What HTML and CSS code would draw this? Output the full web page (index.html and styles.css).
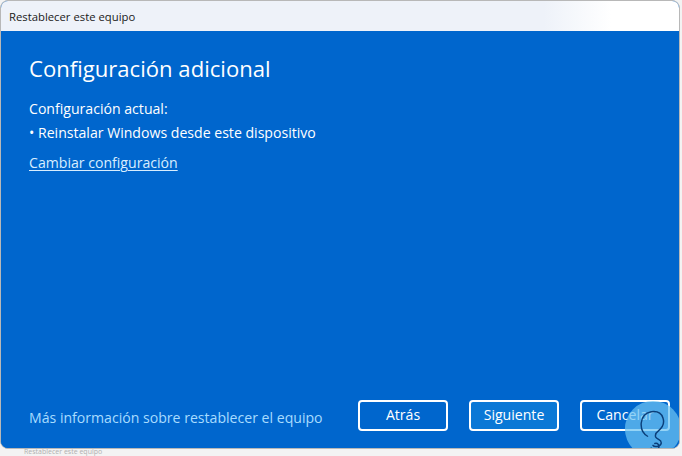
FILE: index.html
```html
<!DOCTYPE html>
<html lang="es">
<head>
<meta charset="utf-8">
<title>Restablecer este equipo</title>
<link rel="stylesheet" href="styles.css">
</head>
<body>
<div class="window">
  <div class="titlebar">Restablecer este equipo</div>
  <div class="content">
    <div class="main">
      <h1 class="heading">Configuración adicional</h1>
      <p class="label">Configuración actual:</p>
      <p class="item">• Reinstalar Windows desde este dispositivo</p>
      <a class="link change" href="#">Cambiar configuración</a>
    </div>
    <div class="footer">
      <a class="more" href="#">Más información sobre restablecer el equipo</a>
      <div class="buttons">
        <button class="btn">Atrás</button>
        <button class="btn primary">Siguiente</button>
        <button class="btn">Cancelar</button>
      </div>
    </div>
  </div>
  <svg class="badge" width="58" height="58" viewBox="0 0 64 64">
    <circle cx="32" cy="32" r="31" fill="#6cc3f2" fill-opacity="0.72"/>
    <path d="M26 40 C16 34 16 16 30 13 C44 11 48 26 38 34 C35 36 34 38 35 41 C37 44 42 44 41 48 C40 52 33 52 32 50 M34 48 C37 47 40 50 38 53 C36 56 31 55 30 53" fill="none" stroke="#0b3f7a" stroke-width="1.6" stroke-linecap="round"/>
  </svg>
</div>
<div class="below">Restablecer este equipo</div>
</body>
</html>
```
FILE: styles.css
```css
* { box-sizing: border-box; }
html, body { margin: 0; padding: 0; }
body {
  width: 682px;
  height: 456px;
  overflow: hidden;
  background: #f3f3f3;
  font-family: "Open Sans", "Noto Sans", sans-serif;
  position: relative;
}
.window {
  width: 680px;
  height: 449px;
  border: 1px solid #b8b8b8;
  border-radius: 8px;
  overflow: hidden;
  display: flex;
  flex-direction: column;
  position: relative;
  background: #0066cd;
}
.titlebar {
  height: 30px;
  flex: none;
  background: linear-gradient(90deg, #eef2f9 0%, #eef2f9 80%, #ffffff 90%);
  color: #1a1a1a;
  font-size: 11.3px;
  padding-left: 8px;
  display: flex;
  align-items: center;
}
.content {
  flex: 1;
  background: #0066cd;
  color: #ffffff;
  display: flex;
  flex-direction: column;
  justify-content: space-between;
  padding: 0 0 17px 28px;
}
.main { display: flex; flex-direction: column; align-items: flex-start; }
.heading {
  margin: 22px 0 0 0;
  font-weight: 400;
  font-size: 22.1px;
  line-height: 30px;
}
.label {
  margin: 16px 0 0 0;
  font-size: 14.1px;
  line-height: 19px;
}
.item {
  margin: 5px 0 0 0;
  font-size: 14.1px;
  line-height: 19px;
}
.link {
  margin-top: 11px;
  font-size: 14.1px;
  line-height: 19px;
  color: #d8eeff;
  text-decoration: underline;
  text-underline-offset: 2px;
}
.footer {
  display: flex;
  align-items: center;
  justify-content: space-between;
  padding-right: 9px;
}
.more {
  font-size: 14.1px;
  color: #a8dcff;
  text-decoration: none;
  margin-top: 3px;
}
.buttons { display: flex; gap: 21px; }
.btn {
  width: 90px;
  height: 31px;
  border: 2px solid #ffffff;
  border-radius: 4px;
  background: #0066cd;
  color: #ffffff;
  font-family: "Open Sans", "Noto Sans", sans-serif;
  font-size: 14.1px;
  line-height: 18px;
  padding: 0 0 1px 0;
}
.btn.primary { background: #0a78d6; }
.badge {
  position: absolute;
  left: 623px;
  top: 399px;
}
.below {
  position: absolute;
  left: 24px;
  top: 448px;
  font-size: 7px;
  line-height: 8px;
  color: #b0b0b0;
}
```
